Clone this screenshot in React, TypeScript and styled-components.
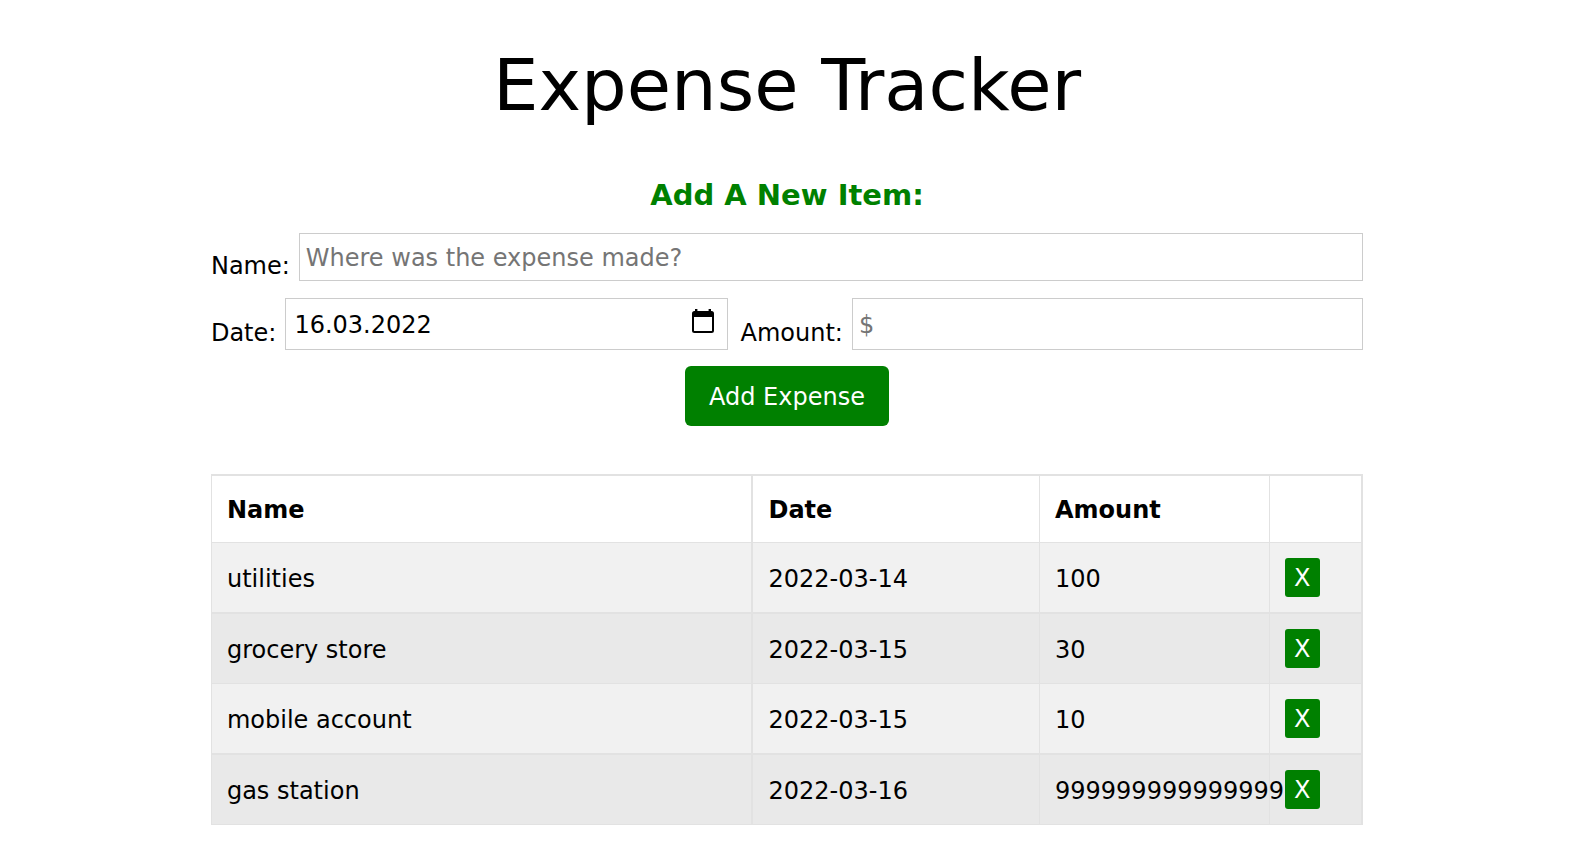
import React from 'react';
import styled, { createGlobalStyle } from 'styled-components';

const Global = createGlobalStyle`
  *, *::before, *::after { box-sizing: border-box; }
  body {
    margin: 0;
    padding-right: 21px;
    background: #fff;
    color: #000;
    font-family: Verdana, 'DejaVu Sans', sans-serif;
    font-size: 24px;
    line-height: 32px;
  }
`;

const Page = styled.main`
  width: 73.2%;
  margin: 0 auto;
  padding: 31px 0 20px;
  text-align: center;
`;

const Title = styled.h1`
  margin: 0;
  font-size: 72px;
  font-weight: 400;
  line-height: 108px;
`;

const Subtitle = styled.h2`
  margin: 38px 0 20px;
  font-size: 29px;
  line-height: 36px;
  color: green;
`;

const Form = styled.form`
  display: flex;
  flex-direction: column;
  gap: 16px;
`;

const Line = styled.div`
  display: flex;
  gap: 13px;
`;

const Field = styled.div<{ $grow: number }>`
  flex: ${(p) => p.$grow} 1 0;
  min-width: 0;
  display: flex;
  gap: 9px;
`;

const Label = styled.label<{ $tall?: boolean }>`
  padding-top: ${(p) => (p.$tall ? 19 : 17)}px;
`;

const Input = styled.input<{ $tall?: boolean }>`
  flex: 1;
  min-width: 0;
  height: ${(p) => (p.$tall ? 52 : 48)}px;
  padding: 2px 6px 0;
  border: 1px solid #ccc;
  border-radius: 0;
  background: #fff;
  color: #000;
  font: inherit;
  &::placeholder { color: #757575; opacity: 1; }
`;

const DateBox = styled.div`
  flex: 1;
  min-width: 0;
  height: 52px;
  display: flex;
  align-items: flex-start;
  padding: 10px 13px 0 0;
  border: 1px solid #ccc;
`;

const DateInput = styled.input`
  flex: 1;
  min-width: 0;
  height: 32px;
  padding: 0 8px;
  border: 0;
  color: #000;
  font: inherit;
`;

const PickerButton = styled.button`
  display: block;
  padding: 0;
  border: 0;
  background: none;
  line-height: 0;
`;

const AddButton = styled.button`
  align-self: center;
  height: 60px;
  padding: 2px 24px 0;
  border: 0;
  border-radius: 6px;
  background: green;
  color: #fff;
  font: inherit;
`;

const Table = styled.table`
  width: 100%;
  margin-top: 48px;
  table-layout: fixed;
  border-collapse: separate;
  border-spacing: 0;
  border: solid #e2e2e2;
  border-width: 1px 1px 0;
  text-align: left;
`;

const Cell = styled.td`
  height: 70px;
  padding: 2px 15px 0;
  border: solid #e2e2e2;
  border-width: 0 1px 1px 0;
  white-space: nowrap;
  &:nth-child(2) { border-left-width: 1px; }
`;

const Head = styled(Cell).attrs({ as: 'th' })`
  height: 68px;
  border-top-width: 1px;
`;

const ActionCell = styled(Cell)`
  padding-top: 0;
`;

const Row = styled.tr`
  background: #f1f1f1;
  &:nth-child(even) { background: #e9e9e9; }
  &:nth-child(even) > td {
    height: 71px;
    border-top-width: 1px;
  }
`;

const Remove = styled.button`
  display: block;
  height: 39px;
  padding: 1px 9px 0;
  border: 0;
  border-radius: 3px;
  background: green;
  color: #fff;
  font: inherit;
`;

const Col = styled.col<{ $w: number }>`
  width: ${(p) => p.$w}%;
`;

const rows = [
  ['utilities', '2022-03-14', '100'],
  ['grocery store', '2022-03-15', '30'],
  ['mobile account', '2022-03-15', '10'],
  ['gas station', '2022-03-16', '999999999999999'],
];

export default function App() {
  return (
    <Page>
      <Global />
      <Title>Expense Tracker</Title>
      <Subtitle>Add A New Item:</Subtitle>
      <Form onSubmit={(e) => e.preventDefault()}>
        <Line>
          <Field $grow={1}>
            <Label htmlFor="name">Name:</Label>
            <Input id="name" placeholder="Where was the expense made?" />
          </Field>
        </Line>
        <Line>
          <Field $grow={517}>
            <Label htmlFor="date" $tall>Date:</Label>
            <DateBox>
              <DateInput id="date" defaultValue="16.03.2022" />
              <PickerButton type="button" aria-label="Pick a date">
                <svg width="22" height="24" viewBox="0 0 22 24" aria-hidden="true">
                  <rect x="1" y="3" width="20" height="20" rx="1.5" fill="none" stroke="#000" strokeWidth="2" />
                  <path d="M1 3h20v5H1zM3 0h2.4v4H3zM16.6 0H19v4h-2.4z" />
                </svg>
              </PickerButton>
            </DateBox>
          </Field>
          <Field $grow={623}>
            <Label htmlFor="amount" $tall>Amount:</Label>
            <Input id="amount" $tall placeholder="$" />
          </Field>
        </Line>
        <AddButton type="submit">Add Expense</AddButton>
      </Form>
      <Table>
        <colgroup>
          <Col $w={47} />
          <Col $w={25} />
          <Col $w={20} />
          <Col $w={8} />
        </colgroup>
        <thead>
          <tr>
            <Head>Name</Head>
            <Head>Date</Head>
            <Head>Amount</Head>
            <Head aria-label="Remove" />
          </tr>
        </thead>
        <tbody>
          {rows.map(([name, date, amount]) => (
            <Row key={name}>
              <Cell>{name}</Cell>
              <Cell>{date}</Cell>
              <Cell>{amount}</Cell>
              <ActionCell><Remove type="button">X</Remove></ActionCell>
            </Row>
          ))}
        </tbody>
      </Table>
    </Page>
  );
}
